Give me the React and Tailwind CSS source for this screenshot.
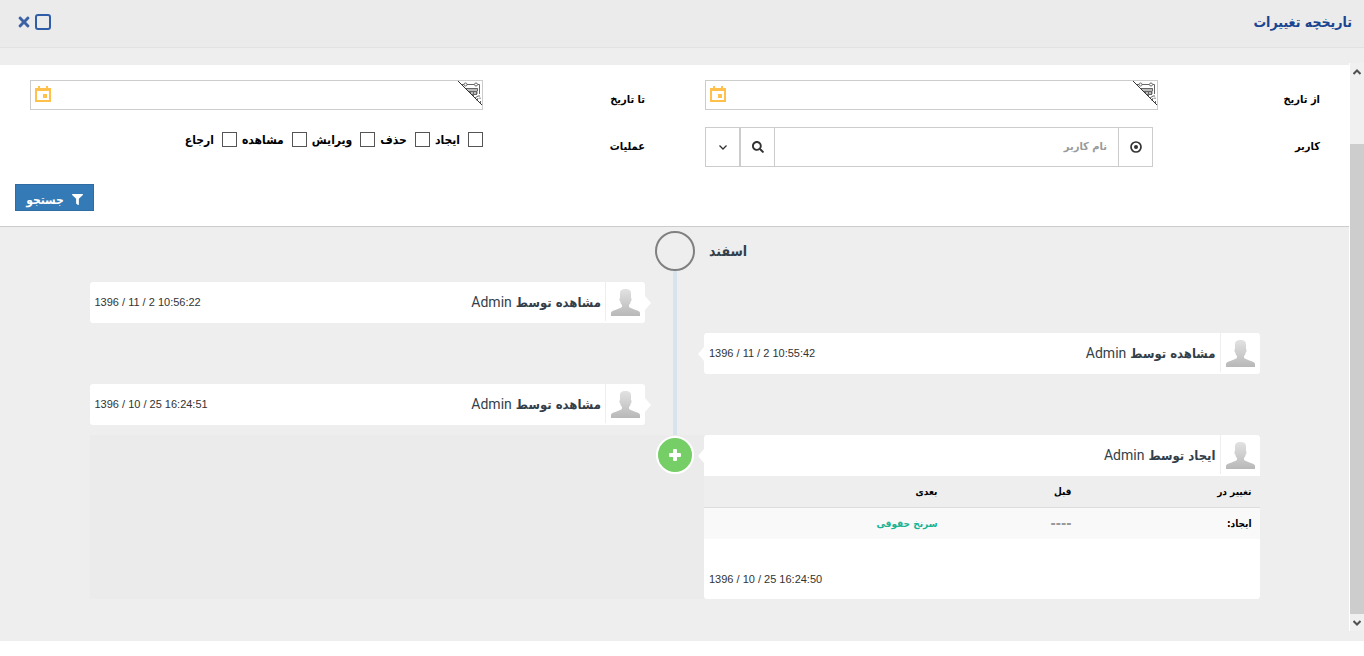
import { FaSearch, FaFilter, FaTimes } from "react-icons/fa";

const fa = "font-['DejaVu_Sans_Condensed','DejaVu_Sans',sans-serif]";

function CalendarIcon() {
  return (
    <svg width="16" height="16" viewBox="0 0 16 16" fill="#ffc04c" shapeRendering="crispEdges" aria-hidden="true">
      <path fillRule="evenodd" d="M3 0h2v2h6V0h2v2h3v14H0V2h3zM2 5v9h12V5z" />
      <rect x="8" y="8" width="4" height="4" />
    </svg>
  );
}

function CornerIcon() {
  return (
    <svg width="24" height="24" viewBox="0 0 24 24" fill="none" stroke="#666" aria-hidden="true">
      <path d="M7 7h13v6h-7z" fill="#bbb" stroke="none" />
      <path d="M9 3.500h7M20 3.500h1.500V13M4 3.500h2M7 7.500h12.500V10" />
      <circle cx="7.500" cy="3.500" r="1.500" />
      <circle cx="18" cy="3.500" r="1.500" />
      <path d="M10 10.500h9M13 13.500h6M12.500 10v3M15.500 10v6M18.500 10v4M17 17l3-2 2 0M20 17l-1 3M22 16.500V18M22.500 20v2" />
      <path d="M0 0L24 24" strokeWidth="1" stroke="#333" />
    </svg>
  );
}

function Avatar() {
  return (
    <svg width="29" height="27" viewBox="0 0 29 27" aria-hidden="true">
      <defs>
        <linearGradient id="person" x1="0" y1="0" x2="0" y2="1">
          <stop offset="0" stopColor="#e2e2e2" />
          <stop offset="1" stopColor="#b8b8b8" />
        </linearGradient>
      </defs>
      <path fill="url(#person)" d="M14.500 0C18.500 0 20 1.500 20 4.500V9c.8.200.8 3-.3 3.500-.2 1.500-.7 2.500-1.700 3.500v1.500c.5 1 1.500 1.500 3 2 2.500 1 5 1.800 6.800 2.700 1 .6 1.200 1.300 1.200 2.300V27H0v-2.500c0-1 .2-1.700 1.200-2.300C3 21.300 5.500 20.500 8 19.500c1.500-.5 2.500-1 3-2V16c-1-1-1.500-2-1.700-3.500-1.100-.5-1.100-3.300-.3-3.500V4.500C9 1.500 10.500 0 14.500 0z" />
    </svg>
  );
}

function Field({ id, label, children }) {
  return (
    <div className="flex items-start">
      <label htmlFor={id} className="w-[162px] shrink-0 pt-3 text-[11px] leading-4 font-bold text-black">{label}</label>
      <div className="min-w-0 flex-1">{children}</div>
    </div>
  );
}

function DateBox({ id }) {
  return (
    <div className="flex h-[30px] items-start border border-[#ccc] bg-white">
      <CornerIcon />
      <input id={id} type="text" className="h-7 min-w-0 flex-1 px-2 text-[12px] outline-none" />
      <button type="button" aria-label="تقویم" className="px-1 py-[5px]"><CalendarIcon /></button>
    </div>
  );
}

function Time({ value }) {
  return <time dir="ltr" className="mr-auto px-[5px] font-['Liberation_Sans',sans-serif] text-[11px] leading-4 text-[#333]">{value}</time>;
}

function Card({ side, title, time, children }) {
  return (
    <article className="relative rounded-[3px] bg-white">
      <span className={side === "right"
        ? "absolute top-[14px] -left-[6px] border-y-[7px] border-r-[6px] border-y-transparent border-r-white"
        : "absolute top-[14px] -right-[6px] border-y-[7px] border-l-[6px] border-y-transparent border-l-white"} />
      <header className="flex h-[41px] items-start">
        <span className="flex h-[39px] w-10 justify-center border-l border-[#eee] pt-[7px]"><Avatar /></span>
        <h2 className="px-1 pt-[10px] text-[13px] leading-5 font-bold text-[#333f4a]">
          {title} <span className="font-['Roboto',sans-serif] text-[14px] font-normal" dir="ltr">Admin</span>
        </h2>
        {!children && <div className="mr-auto flex pt-3"><Time value={time} /></div>}
      </header>
      {children}
      {children && <div className="flex h-[60px] items-center pt-5"><Time value={time} /></div>}
    </article>
  );
}

function Line() {
  return <div className="mx-auto w-1 bg-[#d7e4ed]" />;
}

const row = "grid grid-cols-[minmax(0,1fr)_59px_minmax(0,1fr)]";

export default function App() {
  return (
    <div dir="rtl" className={`${fa} bg-[#eee]`}>
      <header className="flex h-12 items-center justify-between border-b border-[#e2e2e2] bg-[#ebebeb] px-3">
        <h1 className="pb-1 text-[14px] leading-5 font-bold text-[#1a4590]">تاریخچه تغییرات</h1>
        <div className="flex items-center gap-[3px] px-1 pb-1 text-[#3a62a5]">
          <button type="button" aria-label="بزرگ‌نمایی" className="size-4 rounded-[3px] border-2 border-[#2f5da8]" />
          <button type="button" aria-label="بستن"><FaTimes size={16} /></button>
        </div>
      </header>

      <div className="flex pt-[15px] pb-[10px]">
        <div className="flex w-[14px] shrink-0 flex-col bg-[#f0f0f0]">
          <button type="button" aria-label="بالا" className="flex h-[17px] items-center justify-center">
            <svg width="8" height="6" viewBox="0 0 8 6" fill="none" stroke="#505050" strokeWidth="2"><path d="M.5 5L4 1.500 7.500 5" /></svg>
          </button>
          <div className="mt-16 flex-1 bg-[#cdcdcd]" />
          <button type="button" aria-label="پایین" className="flex h-[17px] items-center justify-center">
            <svg width="8" height="6" viewBox="0 0 8 6" fill="none" stroke="#505050" strokeWidth="2"><path d="M.5 1L4 4.500 7.500 1" /></svg>
          </button>
        </div>

        <main className="min-w-0 flex-1 border-r border-white pt-[2px]">
          <form className="border-b border-[#ccc] bg-white pt-[15px] pb-[15px]" onSubmit={(e) => e.preventDefault()}>
            <div className="grid grid-cols-2 gap-x-[60px] gap-y-[17px] pr-[29px] pl-[30px]">
              <Field id="from" label="از تاریخ"><DateBox id="from" /></Field>
              <Field id="to" label="تا تاریخ"><DateBox id="to" /></Field>
              <Field id="user" label="کاربر">
                <div className="mr-[5px] flex h-10 border border-[#ccc]">
                  <button type="button" aria-label="انتخاب" className="flex w-[34px] items-center justify-center border-l border-[#ccc]">
                    <svg width="12" height="12" viewBox="0 0 12 12"><circle cx="6" cy="6" r="5" fill="none" stroke="#333" strokeWidth="1.700" /><circle cx="6" cy="6" r="2" fill="#333" /></svg>
                  </button>
                  <input id="user" type="text" placeholder="نام کاربر" className="min-w-0 flex-1 px-[11px] text-[11px] font-bold outline-none placeholder:text-[#999]" />
                  <button type="button" aria-label="جستجوی کاربر" className="flex w-[35px] items-center justify-center border-x border-[#ccc] text-[#333]"><FaSearch size={12} /></button>
                  <button type="button" aria-label="فهرست" className="flex w-[34px] items-center justify-center border-r border-[#ccc]">
                    <svg width="8" height="5" viewBox="0 0 8 5" fill="none" stroke="#333" strokeWidth="1.300"><path d="M.5.500L4 4 7.500.500" /></svg>
                  </button>
                </div>
              </Field>
              <fieldset className="flex items-start">
                <legend className="float-right w-[162px] pt-3 text-[11px] leading-4 font-bold text-black">عملیات</legend>
                <div className="flex gap-[5px] pt-[5px]">
                  {["ایجاد", "حذف", "ویرایش", "مشاهده", "ارجاع"].map((t) => (
                    <label key={t} className="flex items-start gap-2 text-[12px] leading-4 font-bold text-black">
                      <input type="checkbox" className="size-[15px] appearance-none border border-[#555] bg-white" />
                      <span>{t}</span>
                    </label>
                  ))}
                </div>
              </fieldset>
            </div>
            <div className="mt-[17px] flex justify-end px-[15px]">
              <button type="submit" className="flex h-[27px] w-[79px] items-center justify-center gap-2 border border-[#2e6da4] bg-[#337ab7] pt-1 text-[12px] leading-4 font-bold text-white">
                <FaFilter size={11} />جستجو
              </button>
            </div>
          </form>

          <section className="mx-auto max-w-[1170px] pt-1 pb-8">
            <div className={row}>
              <h2 className="self-start pt-[10px] pl-[5px] text-left text-[14px] leading-5 font-bold text-[#333f4a]">اسفند</h2>
              <div className="flex h-[51px] flex-col items-center">
                <span className="size-10 shrink-0 rounded-full border-2 border-[#808080]" />
                <span className="w-1 flex-1 bg-[#d7e4ed]" />
              </div>
            </div>
            <div className={row}>
              <div />
              <Line />
              <div className="pb-[10px]"><Card side="left" title="مشاهده توسط" time="1396 / 11 / 2 10:56:22" /></div>
            </div>
            <div className={row}>
              <div className="pb-[10px]"><Card side="right" title="مشاهده توسط" time="1396 / 11 / 2 10:55:42" /></div>
              <Line />
            </div>
            <div className={row}>
              <div />
              <Line />
              <div className="pb-[10px]"><Card side="left" title="مشاهده توسط" time="1396 / 10 / 25 16:24:51" /></div>
            </div>
            <div className={`${row} bg-[#ebebeb]`}>
              <Card side="right" title="ایجاد توسط" time="1396 / 10 / 25 16:24:50">
                <table className="w-full table-fixed text-right text-[10px] leading-4 font-bold">
                  <thead>
                    <tr className="h-[31px] border-b border-[#ddd] bg-[#eee] text-black">
                      <th className="w-[180px] px-2 pt-[2px]">تغییر در</th>
                      <th className="w-[134px] px-2 pt-[2px]">قبل</th>
                      <th className="px-2 pt-[2px]">بعدی</th>
                    </tr>
                  </thead>
                  <tbody>
                    <tr className="h-8 bg-[#f9f9f9]">
                      <td className="px-2 pt-[2px] text-black">ایجاد:</td>
                      <td className="px-2 text-[14px] text-[#999]">----</td>
                      <td className="px-2 pt-[2px] text-[#1ab394]">سرنخ حقوقی</td>
                    </tr>
                  </tbody>
                </table>
              </Card>
              <div className="flex items-start justify-center pt-px">
                <span className="flex size-[38px] items-center justify-center rounded-full border-2 border-white bg-[#75ce66]">
                  <svg width="12" height="12" viewBox="0 0 12 12" fill="#fff"><rect x="4" width="4" height="12" rx="1" /><rect y="4" width="12" height="4" rx="1" /></svg>
                </span>
              </div>
            </div>
          </section>
        </main>
      </div>
    </div>
  );
}
